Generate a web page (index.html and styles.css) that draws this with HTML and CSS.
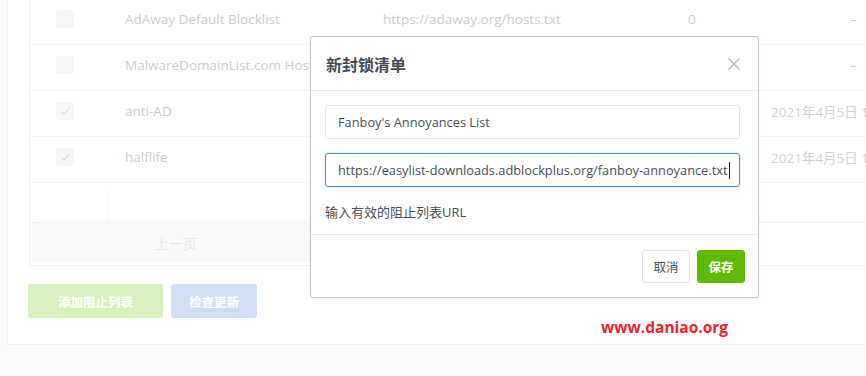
FILE: index.html
```html
<!DOCTYPE html>
<html lang="zh-CN">
<head>
<meta charset="utf-8">
<title>新封锁清单</title>
<link rel="stylesheet" href="styles.css">
</head>
<body>
<div class="page">
  <div class="card">
    <div class="table">
      <div class="row first">
        <div class="c-check"><span class="cb"></span></div>
        <div class="c-name">AdAway Default Blocklist</div>
        <div class="c-url">https://adaway.org/hosts.txt</div>
        <div class="c-count">0</div>
        <div class="c-date dash">–</div>
      </div>
      <div class="row">
        <div class="c-check"><span class="cb"></span></div>
        <div class="c-name cut">MalwareDomainList.com Hosts List</div>
        <div class="c-url"></div>
        <div class="c-count"></div>
        <div class="c-date dash">–</div>
      </div>
      <div class="row">
        <div class="c-check"><span class="cb on"><svg viewBox="0 0 18 18" width="18" height="18"><polyline points="5,9.5 8,12 13,6.5" fill="none" stroke="#cfcfcf" stroke-width="1"/></svg></span></div>
        <div class="c-name">anti-AD</div>
        <div class="c-url"></div>
        <div class="c-count"></div>
        <div class="c-date">2021年4月5日 12:00:31</div>
      </div>
      <div class="row">
        <div class="c-check"><span class="cb on"><svg viewBox="0 0 18 18" width="18" height="18"><polyline points="5,9.5 8,12 13,6.5" fill="none" stroke="#cfcfcf" stroke-width="1"/></svg></span></div>
        <div class="c-name">halflife</div>
        <div class="c-url"></div>
        <div class="c-count"></div>
        <div class="c-date">2021年4月5日 12:00:32</div>
      </div>
      <div class="row pad"><div class="pad-cell"></div><div></div></div>
      <div class="pagination">
        <button class="prev">上一页</button>
      </div>
    </div>
    <div class="actions">
      <button class="btn btn-add">添加阻止列表</button>
      <button class="btn btn-check">检查更新</button>
    </div>
  </div>
</div>

<div class="modal">
  <div class="modal-header">
    <h4 class="modal-title">新封锁清单</h4>
    <span class="close"><svg viewBox="0 0 14 14" width="14" height="14"><path d="M1.5 1.5 L12.5 12.5 M12.5 1.5 L1.5 12.5" stroke="#b0b4b9" stroke-width="1.3" fill="none"/></svg></span>
  </div>
  <div class="modal-body">
    <div class="input">Fanboy's Annoyances List</div>
    <div class="input focus">https://easylist-downloads.adblockplus.org/fanboy-annoyance.txt<span class="caret"></span></div>
    <div class="help">输入有效的阻止列表URL</div>
  </div>
  <div class="modal-footer">
    <button class="mbtn cancel">取消</button>
    <button class="mbtn save">保存</button>
  </div>
</div>

<div class="watermark">www.daniao.org</div>
</body>
</html>
```

FILE: styles.css
```css
* { box-sizing: border-box; }
html, body { margin: 0; padding: 0; }
body {
  width: 866px;
  height: 376px;
  overflow: hidden;
  background: #fbfbfb;
  font-family: "Open Sans", "Noto Sans CJK SC", sans-serif;
  position: relative;
}
button { font-family: inherit; margin: 0; }

.page { padding-left: 7px; }
.card {
  width: 900px;
  background: #fff;
  border: 1px solid #f2f2f2;
  border-top: 0;
  padding: 0 0 26px 21px;
}

.table {
  border-left: 1px solid #f1f1f1;
  border-bottom: 1px solid #f1f1f1;
}
.row {
  display: grid;
  grid-template-columns: 70px 283px 305px 83px 1fr;
  align-items: center;
  height: 46px;
  padding-bottom: 5px;
  border-bottom: 1px solid #f5f5f5;
  font-size: 13.5px;
  color: #cdcdcd;
  white-space: nowrap;
}
.row.first { height: 45px; padding-bottom: 7px; }
.c-check { display: flex; justify-content: center; }
.cb {
  width: 18px; height: 18px;
  border-radius: 3px;
  background: #f6f6f6;
  display: block;
}
.cb svg { display: block; }
.c-name { padding-left: 25px; overflow: hidden; }
.c-name.cut { width: 210px; }
.c-url { overflow: hidden; }
.c-date { color: #d2d2d2; }
.c-date.dash { padding-left: 79px; }

.row.pad {
  height: 39px;
  padding: 0;
  border-bottom: 0;
  grid-template-columns: 79px 1fr;
  align-items: stretch;
}
.pad-cell { border-right: 1px solid #f7f7f7; margin: 7px 0 1px; }

.pagination {
  border-top: 1px solid #f2f2f2;
  padding: 0 3px 3px 2px;
  box-shadow: 0 -4px 10px -6px rgba(0,0,0,0.06);
}
.prev {
  width: 288px;
  height: 39px;
  border: 0;
  border-radius: 3px;
  background: #f9f9f9;
  color: #e6e6e6;
  font-size: 14px;
  font-family: "Noto Sans CJK SC", sans-serif;
}

.actions {
  margin: 18px 0 0 -1px;
  display: flex;
  gap: 8px;
}
.btn {
  height: 34px;
  border: 0;
  border-radius: 3px;
  color: #fff;
  font-size: 12.5px;
  font-weight: 700;
  font-family: "Noto Sans CJK SC", sans-serif;
}
.btn-add { width: 135px; background: #d8efc0; }
.btn-check { width: 86px; background: #d1dff2; }

.modal {
  position: absolute;
  left: 310px;
  top: 36px;
  width: 449px;
  height: 262px;
  background: #fff;
  border: 1px solid #c6c6c6;
  border-radius: 3px;
  box-shadow: 0 1px 3px rgba(0,0,0,0.06);
}
.modal-header {
  height: 54px;
  border-bottom: 1px solid #e8eaec;
  display: flex;
  align-items: center;
  justify-content: space-between;
  padding: 0 17px 0 15px;
}
.modal-title {
  margin: 0;
  font-size: 16px;
  font-weight: 600;
  color: #454b52;
  font-family: "Noto Sans CJK SC", sans-serif;
}
.close { display: block; width: 14px; height: 14px; }
.close svg { display: block; }

.modal-body {
  height: 143px;
  padding: 14px 0 0 14px;
}
.input {
  width: 415px;
  height: 34px;
  border: 1px solid #e2e6ea;
  border-radius: 3px;
  padding: 0 0 0 12px;
  display: flex;
  align-items: center;
  font-size: 12.8px;
  color: #495057;
  white-space: nowrap;
  overflow: hidden;
}
.input + .input { margin-top: 14px; }
.input.focus {
  border-color: #4b92e0;
  box-shadow: 0 0 0 1px rgba(75,146,224,0.12);
}
.caret {
  display: inline-block;
  width: 1px;
  height: 17px;
  background: #222;
  margin-left: 1px;
}
.help {
  margin-top: 15px;
  font-size: 13px;
  color: #495057;
  font-family: "Open Sans", "Noto Sans CJK SC", sans-serif;
}

.modal-footer {
  display: flex;
  justify-content: flex-end;
  gap: 7px;
  border-top: 1px solid #e8eaec;
  padding: 15px 13px 0 0;
}
.mbtn {
  width: 48px;
  height: 33px;
  border-radius: 3px;
  font-size: 12.5px;
  font-family: "Noto Sans CJK SC", sans-serif;
}
.cancel { background: #fff; border: 1px solid #e0e4e8; color: #495057; }
.save { background: #5eba00; border: 1px solid #5eba00; color: #fff; font-weight: 700; }

.watermark {
  position: absolute;
  left: 601px;
  top: 316px;
  font-size: 15.5px;
  font-weight: 700;
  color: #e8232c;
  font-family: "Open Sans", sans-serif;
  line-height: 22px;
}
```
